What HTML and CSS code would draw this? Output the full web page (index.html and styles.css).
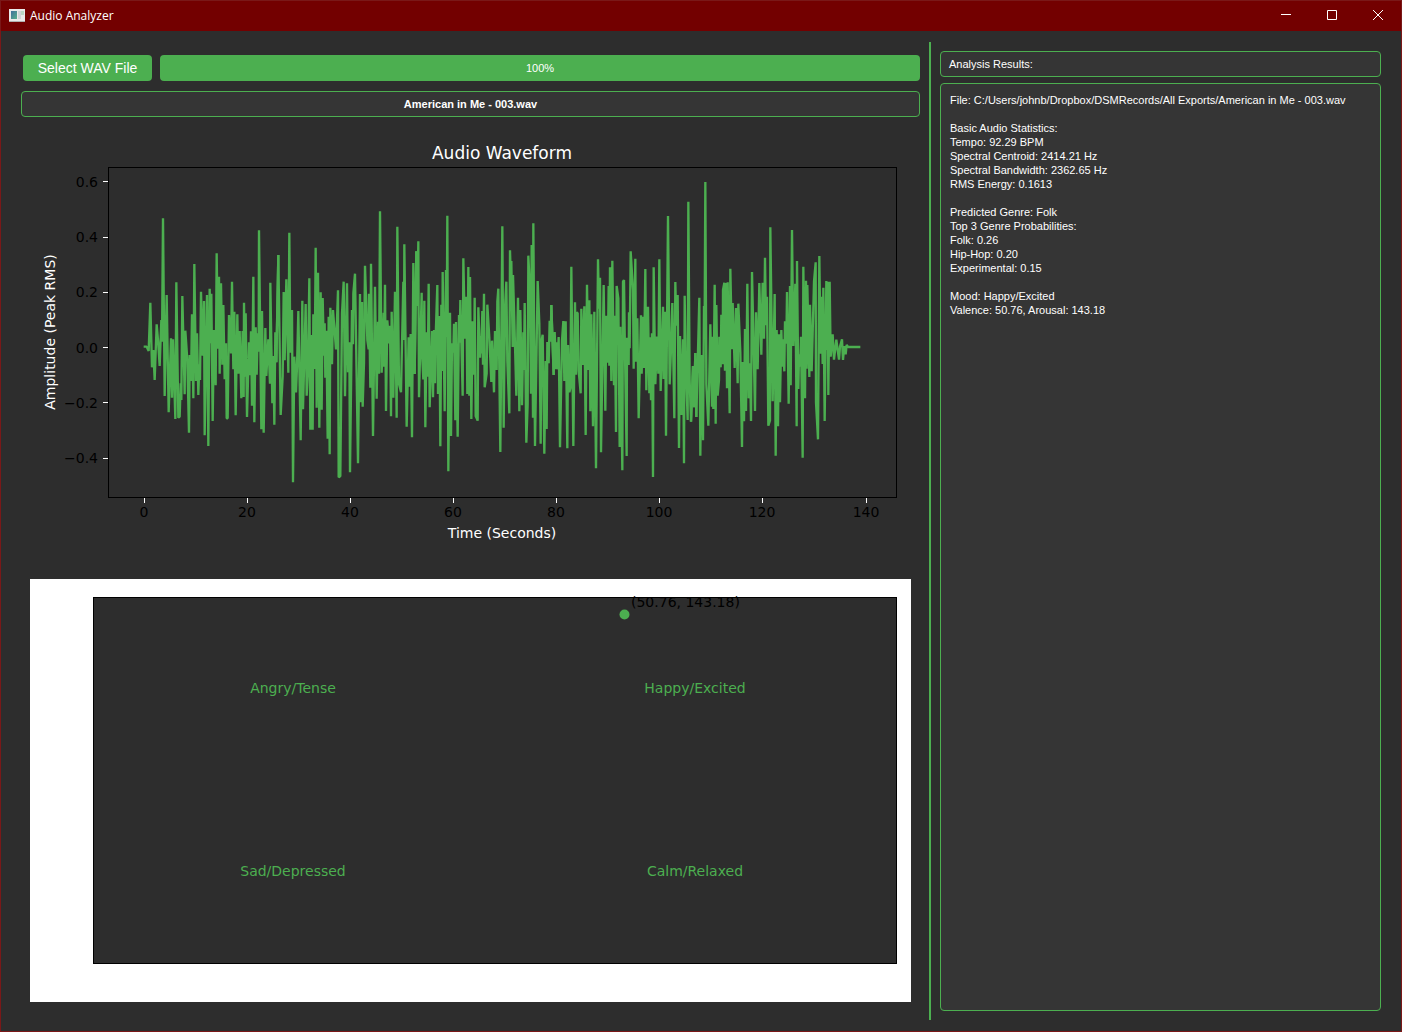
FILE: index.html
```html
<!DOCTYPE html>
<html lang="en">
<head>
<meta charset="utf-8">
<title>Audio Analyzer</title>
<link rel="stylesheet" href="styles.css">
</head>
<body>
<div class="window">
  <header class="titlebar">
    <svg class="app-icon" width="16" height="13" viewBox="0 0 16 13" aria-hidden="true">
      <defs><linearGradient id="pane" x1="0" y1="0" x2="1" y2="1"><stop offset="0" stop-color="#3f6f9c"/><stop offset="1" stop-color="#56b08a"/></linearGradient></defs>
      <rect width="16" height="13" fill="#e9e9e9"/>
      <rect x="2" y="2" width="6" height="8" fill="url(#pane)"/>
      <rect x="9" y="2" width="3" height="8" fill="#cfd3d6"/>
      <rect x="12" y="2" width="3" height="4" fill="#b9d6c4"/>
      <path d="M0 12.5H16" stroke="#b0b0b0"/>
    </svg>
    <h1 class="title">Audio Analyzer</h1>
    <div class="window-buttons">
      <button class="window-button" aria-label="Minimize"><svg width="10" height="10" viewBox="0 0 10 10"><path d="M0 4.5H10"/></svg></button>
      <button class="window-button" aria-label="Maximize"><svg width="10" height="10" viewBox="0 0 10 10"><path d="M.5 .5H9.5V9.5H.5Z"/></svg></button>
      <button class="window-button" aria-label="Close"><svg width="10" height="10" viewBox="0 0 10 10"><path d="M0 0L10 10M10 0L0 10"/></svg></button>
    </div>
  </header>
  <main class="content">
    <section class="left">
      <div class="toolbar">
        <button class="select">Select WAV File</button>
        <div class="progress" role="progressbar" aria-valuenow="100" aria-valuemin="0" aria-valuemax="100"><div class="fill" style="width:100%">100%</div></div>
      </div>
      <div class="box track">American in Me - 003.wav</div>
      <div class="figures">
        <svg class="figure" viewBox="0 0 881 423" role="img" aria-label="Audio Waveform">
          <text class="chart-title" x="472" y="29">Audio Waveform</text>
          <g class="wave">
            <g transform="translate(100 40) scale(.33333)">
              <polyline points="41,530 50,530 56,543 61,398 66,592 70,540 74,630 80,463 84,510 89,588 94,450 96,515 99,145 104,678 110,375 116,727 123,505 126,683 129,508 136,747 139,337 145,743 149,740 152,640 154,690 157,378 164,673 166,482 172,570 177,788 179,555 183,633 186,433 190,685 193,282 198,633 201,490 205,675 208,583 210,630 213,365 218,557 222,393 224,796 231,375 235,828 239,356 242,520 244,371 248,753 252,480 257,646 260,250 264,536 267,320 269,611 273,340 277,584 280,405 284,628 288,520 290,745 293,745 297,435 303,550 306,335 310,598 313,425 317,736 322,433 325,611 329,483 334,685 338,483 341,681 342,398 345,620 347,430 351,741 357,517 360,616 363,484 366,707 370,320 373,757 377,472 380,614 383,490 386,545 387,181 394,778 396,423 401,788 406,474 409,618 415,508 420,641 421,338 427,700 430,558 433,764 436,487 439,577 445,255"/>
            </g>
            <g transform="translate(240 40) scale(.33333)">
              <polyline points="19,577 25,255 32,735 38,620 41,366 44,571 49,328 55,608 58,188 61,548 66,420 69,937 73,560 78,667 81,590 85,423 92,811 97,392 99,718 107,402 110,677 114,598 118,325 121,779 125,495 128,779 130,433 134,597 137,233 140,713 144,308 148,773 152,367 155,719 158,384 162,557 164,460 166,623 169,482 173,806 176,440 179,853 181,413 186,583 189,420 194,486 198,538 204,361 206,922 211,918 216,430 221,335 225,679 231,340 234,607 238,517 240,907 246,420 249,523 250,370 255,311 264,880 270,372 272,697 276,396 278,710 282,580 285,287 292,510 296,538 297,371 301,653 303,281 309,798 315,350 320,686 324,455 327,611 330,124 335,608 341,428 342,590 345,344 348,723 352,451 357,520 360,467 363,739 365,425 370,683 375,365 380,743 382,170 387,642 393,667 400,335 402,510 403,223 410,770 416,502 419,650 422,492 426,802 430,279 434,612 439,244"/>
            </g>
            <g transform="translate(380 40) scale(.33333)">
              <polyline points="14,612 19,244 22,408 25,214 27,682 35,368 36,545 40,628 43,392 46,772 50,487 53,620 56,341 59,712 66,483 69,682 72,480 75,640 77,500 82,345 84,672 88,438 91,829 94,404 97,603 98,306 104,724 108,300 110,500 112,137 115,904 120,428 123,798 126,520 130,548 132,461 136,751 138,456 143,800 147,435 149,518 151,390 158,677 160,265 165,506 169,380 172,672 175,291 178,677 180,321 184,747 188,454 192,614 194,383 197,738 203,752 205,412 210,563 212,498 214,550 217,423 219,584 222,371 224,652 230,611 232,404 238,503 244,636 246,512 252,667 255,483 260,600 262,395 265,356 271,846 277,169 281,773 285,414 289,335 292,573 298,730 300,241 304,372 304,273 308,531 309,315 313,450 319,677 324,383 328,724 331,420 336,706 340,487 342,600 344,399 349,818 353,703 355,257 360,364 363,671 365,225 369,743 370,160 375,828 383,333 388,460 392,821 394,515 398,494 403,851 407,573 410,777 412,516 416,580 419,452 422,515 424,405 431,615"/>
            </g>
            <g transform="translate(520 40) scale(.33333)">
              <polyline points="4,405 11,615 14,486 18,598 20,517 22,598 26,501 30,832 36,512 40,453 43,633 47,454 52,835 54,525 58,667 61,655 64,290 70,828 75,397 78,614 80,427 83,430 86,603 92,670 94,416 98,585 103,409 107,795 111,344 115,600 118,391 121,724 124,433 129,769 133,425 138,895 144,268 147,416 150,323 153,847 158,533 161,345 166,722 169,437 173,578 176,348 178,587 180,292 184,633 187,272 192,646 194,437 198,786 200,348 205,385 209,831 211,470 217,901 219,335 222,330 225,556 230,858 231,503 236,585 237,427 239,535 242,244 249,360 251,596 256,266 258,575 262,445 266,745 273,436 275,611 279,440 282,594 286,297 289,661 294,410 298,670 300,502 303,691 306,490 309,921 311,292 316,643 321,500 325,611 328,268 332,663 339,410 341,627 345,425 348,797 354,138 359,643 363,538 367,399 373,745 376,336 379,467 383,375 387,834 390,498 394,735 399,508 402,880 404,377 407,570 413,750 415,95 419,630 423,755 429,588 432,712 436,549 439,741"/>
            </g>
            <g transform="translate(660 40) scale(.33333)">
              <polyline points="3,755 9,588 12,712 16,549 19,741 28,383 31,857 34,555 39,811 42,408 44,445 46,36 49,643 55,767 61,463 66,710 68,500 70,717 74,344 77,761 79,405 83,677 87,630 88,500 92,592 94,434 98,583 99,360 103,338 105,602 108,339 111,655 113,337 119,730 121,296 126,538 128,399 134,594 138,414 143,640 145,401 151,548 156,831 158,576 162,754 165,477 168,723 172,341 176,685 180,580 183,753 186,306 195,723 198,427 203,598 208,339 214,554 218,338 222,506 225,263 228,466 231,380 235,767 240,751 241,172 248,694 254,372 257,857 260,480 264,769 267,493 270,697 274,480 277,590 279,508 283,604 285,454 289,521 291,366 296,701 300,348 302,646 306,180 310,528 316,341 320,769 321,273 325,657 327,553 331,590 333,500 338,863 340,290 345,685 348,332 350,596 352,345 358,621 360,404 365,604 372,335 377,277 378,697 384,808 388,258 392,551 394,380 398,582 400,353 404,753 409,333 411,540 413,335 415,675 419,335 422,560 428,493 432,569 439,509 443,540 447,569 450,530 456,508 459,570 463,528 467,553 470,525 474,531 511,531"/>
            </g>
          </g>
          <rect class="frame" x="78.5" y="37.5" width="788" height="330"/>
          <path class="ticks" d="M73 51.5h5M73 107.5h5M73 162.5h5M73 217.5h5M73 272.5h5M73 328.5h5M114.5 368v5M217.5 368v5M320.5 368v5M423.5 368v5M526.5 368v5M629.5 368v5M732.5 368v5M836.5 368v5"/>
          <g class="y-labels">
            <text x="68" y="57">0.6</text><text x="68" y="112">0.4</text><text x="68" y="167">0.2</text>
            <text x="68" y="223">0.0</text><text x="68" y="278">−0.2</text><text x="68" y="333">−0.4</text>
          </g>
          <g class="x-labels">
            <text x="114" y="387">0</text><text x="217" y="387">20</text><text x="320" y="387">40</text><text x="423" y="387">60</text>
            <text x="526" y="387">80</text><text x="629" y="387">100</text><text x="732" y="387">120</text><text x="836" y="387">140</text>
          </g>
          <text class="axis-title" x="472" y="408">Time (Seconds)</text>
          <text class="axis-title" transform="translate(25 202) rotate(-90)">Amplitude (Peak RMS)</text>
        </svg>
        <svg class="figure mood" viewBox="0 0 881 423" role="img" aria-label="Mood quadrant">
          <rect class="frame filled" x="63.5" y="18.5" width="803" height="366"/>
          <circle class="point" cx="594.5" cy="35.5" r="5"/>
          <text class="point-label" x="601" y="28">(50.76, 143.18)</text>
          <g class="quadrants">
            <text x="263" y="114">Angry/Tense</text><text x="665" y="114">Happy/Excited</text>
            <text x="263" y="297">Sad/Depressed</text><text x="665" y="297">Calm/Relaxed</text>
          </g>
        </svg>
      </div>
    </section>
    <div class="splitter" role="separator" aria-orientation="vertical"></div>
    <section class="right">
      <label class="box heading" for="results">Analysis Results:</label>
      <textarea class="box results" id="results" readonly>File: C:/Users/johnb/Dropbox/DSMRecords/All Exports/American in Me - 003.wav

Basic Audio Statistics:
Tempo: 92.29 BPM
Spectral Centroid: 2414.21 Hz
Spectral Bandwidth: 2362.65 Hz
RMS Energy: 0.1613

Predicted Genre: Folk
Top 3 Genre Probabilities:
Folk: 0.26
Hip-Hop: 0.20
Experimental: 0.15

Mood: Happy/Excited
Valence: 50.76, Arousal: 143.18</textarea>
    </section>
  </main>
</div>
</body>
</html>
```
FILE: styles.css
```css
* { box-sizing: border-box; }
body {
  margin: 0;
  background: #2d2d2d;
  color: #fff;
  font: 11px/14px "Liberation Sans", Arial, sans-serif;
}
button { border: 0; color: inherit; font: inherit; }
.window {
  display: flex;
  flex-direction: column;
  min-height: 100vh;
  border: 1px solid #7a1818;
}
.titlebar {
  display: flex;
  align-items: center;
  height: 30px;
  padding-left: 8px;
  background: #730000;
}
.app-icon { margin-bottom: 2px; }
.title {
  margin: 0 0 0 5px;
  font: 12px/16px "Open Sans", "Noto Sans", sans-serif;
}
.window-buttons { display: flex; margin-left: auto; align-self: stretch; }
.window-button {
  display: grid;
  place-items: center;
  width: 46px;
  padding: 0 0 2px;
  background: none;
}
.window-button svg { fill: none; stroke: #fff; overflow: visible; }
.content {
  flex: 1;
  display: grid;
  grid-template-columns: minmax(0, 899fr) 2px minmax(0, 441fr);
  gap: 9px;
  padding: 11px 20px;
}
.left { padding-top: 13px; }
.toolbar { display: flex; gap: 8px; height: 26px; padding-left: 2px; }
.select {
  width: 129px;
  padding: 0;
  border-radius: 4px;
  background: #4caf50;
  font-size: 14px;
}
.progress { flex: 1; border-radius: 4px; background: #353535; overflow: hidden; }
.fill {
  height: 100%;
  background: #4caf50;
  line-height: 26px;
  text-align: center;
}
.box {
  border: 1px solid #4caf50;
  border-radius: 4px;
  background: #353535;
}
.track {
  margin-top: 10px;
  padding: 5px;
  font-weight: bold;
  text-align: center;
}
.figures {
  display: flex;
  flex-direction: column;
  gap: 26px;
  padding: 13px 9px 0;
}
.figure {
  display: block;
  width: 100%;
  font: 14px "DejaVu Sans", sans-serif;
}
.mood { background: #fff; }
.chart-title { font-size: 17px; fill: #fff; text-anchor: middle; }
.axis-title { fill: #fff; text-anchor: middle; }
.x-labels { text-anchor: middle; }
.y-labels { text-anchor: end; }
.quadrants { fill: #4caf50; text-anchor: middle; }
.frame { fill: none; stroke: #000; }
.filled { fill: #2d2d2d; }
.ticks { stroke: #fff; }
.wave {
  fill: none;
  stroke: #4caf50;
  stroke-width: 7px;
  stroke-linejoin: bevel;
}
.point { fill: #4caf50; }
.splitter { background: #4caf50; }
.right {
  display: flex;
  flex-direction: column;
  gap: 6px;
  padding: 9px 0;
}
.heading { padding: 5px 8px; }
.results {
  flex: 1;
  width: 100%;
  margin: 0;
  padding: 9px;
  color: inherit;
  font: inherit;
  resize: none;
  outline: 0;
}
```
